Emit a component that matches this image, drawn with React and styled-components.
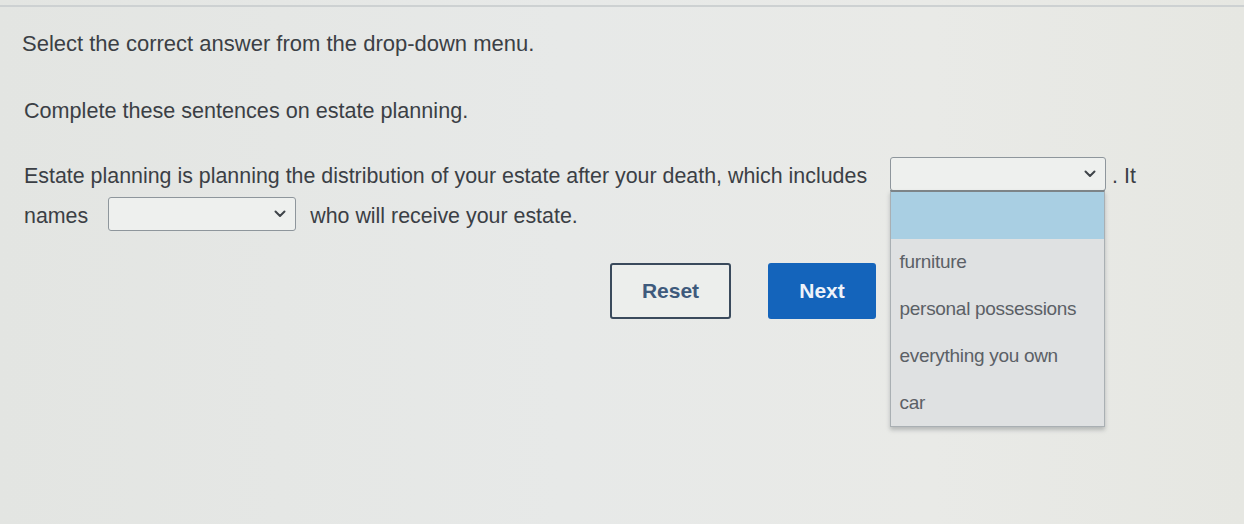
import React from "react";
import styled, { createGlobalStyle } from "styled-components";

const Global = createGlobalStyle`
  html, body { margin: 0; padding: 0; }
  body {
    width: 1244px; height: 524px; overflow: hidden;
    background: linear-gradient(90deg, #e3e5e2 0%, #e7e9e8 45%, #e9eae7 75%, #e6e7e2 100%);
    font-family: "Liberation Sans", Arial, sans-serif;
    color: #3a3d42;
  }
`;

const Page = styled.div`
  width: 1244px;
  height: 519px;
  border-top: 2px solid #cdd1d2;
  margin-top: 5px;
  box-sizing: border-box;
  padding: 24px 0 0 22px;
  display: flex;
  flex-direction: column;
  align-items: flex-start;
`;

const Instruction = styled.p`
  margin: 0;
  font-size: 22px;
  line-height: 26px;
  color: #3b3f45;
`;

const Lead = styled(Instruction)`
  margin-top: 41px;
  padding-left: 2px;
  font-size: 21.6px;
`;

const Sentence = styled.div`
  margin-top: 32px;
  padding-left: 2px;
  font-size: 21.4px;
  line-height: 40px;
  width: 1180px;
  color: #3b3f45;
`;

const SelectBox = styled.span`
  position: relative;
  display: inline-block;
  vertical-align: middle;
  box-sizing: border-box;
  width: ${p => p.$w}px;
  height: 34px;
  margin: 0 ${p => p.$mr}px 0 ${p => p.$ml}px;
  border: 1.5px solid #8e969c;
  border-radius: 3px;
  background: #eef0ee;
  top: -3px;
`;

const Chevron = styled.svg`
  position: absolute;
  right: 9px;
  top: 12px;
`;

const Menu = styled.div`
  position: absolute;
  left: -1.5px;
  top: 32px;
  width: 215px;
  box-sizing: border-box;
  background: #dfe1e2;
  border: 1.5px solid #a9afb3;
  border-top: 2px solid #7d8488;
  box-shadow: 0 3px 4px rgba(90, 95, 100, 0.35);
  z-index: 5;
`;

const Option = styled.div`
  height: 46.8px;
  line-height: 46px;
  padding-left: 9px;
  font-size: 19px;
  letter-spacing: -0.3px;
  color: #5b6066;
  background: ${p => (p.$active ? "#a9cfe3" : "transparent")};
  white-space: nowrap;
`;

const Buttons = styled.div`
  display: flex;
  gap: 37px;
  margin: 27px 0 0 588px;
`;

const Button = styled.button`
  box-sizing: border-box;
  height: 56px;
  width: ${p => p.$w}px;
  font-family: "Liberation Sans", Arial, sans-serif;
  font-weight: bold;
  font-size: 21px;
  border-radius: 3px;
  cursor: pointer;
  ${p =>
    p.$primary
      ? `background: #1464bb; color: #eef3fa; border: none;`
      : `background: #eceeec; color: #3e5a7c; border: 2px solid #3a4a5c;`}
`;

function Select({ w, ml, mr, open, options }) {
  return (
    <SelectBox $w={w} $ml={ml} $mr={mr}>
      <Chevron width="12" height="8" viewBox="0 0 12 8">
        <path d="M1.5 1.5 L6 6 L10.5 1.5" fill="none" stroke="#3f4449" strokeWidth="2" strokeLinecap="round" strokeLinejoin="round" />
      </Chevron>
      {open && (
        <Menu>
          <Option $active />
          {options.map(o => (
            <Option key={o}>{o}</Option>
          ))}
        </Menu>
      )}
    </SelectBox>
  );
}

export default function App() {
  return (
    <>
      <Global />
      <Page>
        <Instruction>Select the correct answer from the drop-down menu.</Instruction>
        <Lead>Complete these sentences on estate planning.</Lead>
        <Sentence>
          Estate planning is planning the distribution of your estate after your death, which includes
          <Select
            w={216}
            ml={23}
            mr={6}
            open
            options={["furniture", "personal possessions", "everything you own", "car"]}
          />
          . It
          <br />
          names
          <Select w={188} ml={20} mr={14} />
          who will receive your estate.
        </Sentence>
        <Buttons>
          <Button $w={121}>Reset</Button>
          <Button $primary $w={108}>Next</Button>
        </Buttons>
      </Page>
    </>
  );
}
